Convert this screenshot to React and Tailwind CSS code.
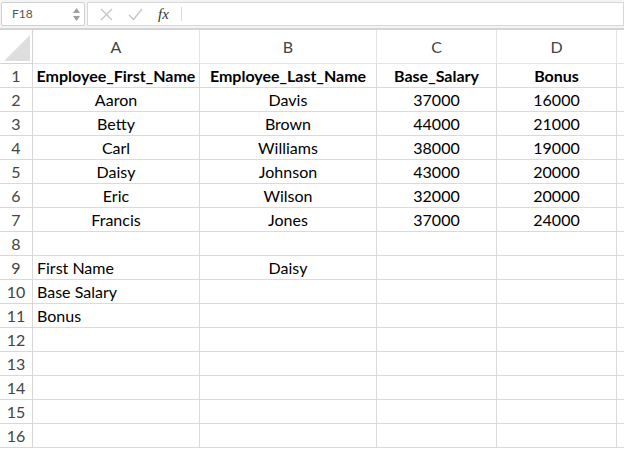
import React from "react";

const cols = ["A", "B", "C", "D"];

const rows = [
  ["Employee_First_Name", "Employee_Last_Name", "Base_Salary", "Bonus"],
  ["Aaron", "Davis", "37000", "16000"],
  ["Betty", "Brown", "44000", "21000"],
  ["Carl", "Williams", "38000", "19000"],
  ["Daisy", "Johnson", "43000", "20000"],
  ["Eric", "Wilson", "32000", "20000"],
  ["Francis", "Jones", "37000", "24000"],
  ["", "", "", ""],
  ["First Name", "Daisy", "", ""],
  ["Base Salary", "", "", ""],
  ["Bonus", "", "", ""],
  ["", "", "", ""],
  ["", "", "", ""],
  ["", "", "", ""],
  ["", "", "", ""],
  ["", "", "", ""],
];

const gridCols = "grid grid-cols-[33px_167px_177px_120px_120px_1fr]";

function FormulaBar() {
  return (
    <div className="flex h-[30px] items-stretch bg-[#f4f4f4] border-b-2 border-[#d4d4d4] pt-[2px] pb-[2px]">
      <div className="ml-[1px] flex w-[84px] items-center justify-between rounded-[2px] border border-[#d0d0d0] bg-white pl-[10px] pr-[4px]">
        <span className="text-[12px] text-[#555]">F18</span>
        <div className="flex flex-col items-center gap-[3px]">
          <svg width="7" height="5" viewBox="0 0 7 5"><path d="M3.5 0L7 5H0z" fill="#a0a0a0" /></svg>
          <svg width="7" height="5" viewBox="0 0 7 5"><path d="M0 0h7L3.5 5z" fill="#a0a0a0" /></svg>
        </div>
      </div>
      <div className="ml-[2px] flex flex-1 items-center border border-[#d8d8d8] bg-white">
        <div className="flex items-center gap-[15px] pl-[12px] pr-[12px]">
          <svg width="13" height="13" viewBox="0 0 13 13"><path d="M1 1l11 11M12 1L1 12" stroke="#c4c4c4" strokeWidth="1.3" /></svg>
          <svg width="15" height="13" viewBox="0 0 15 13"><path d="M1 7l4.5 4.5L14 1" stroke="#c4c4c4" strokeWidth="1.3" fill="none" /></svg>
          <span className="text-[15px] italic text-[#333]" style={{ fontFamily: "'Liberation Serif', serif" }}>fx</span>
        </div>
        <div className="h-[14px] w-px bg-[#dcdcdc]" />
      </div>
    </div>
  );
}

function HeaderRow() {
  return (
    <div className={`${gridCols} h-[34px]`}>
      <div className="flex items-end justify-end border-r border-b border-[#d4d4d4] pr-[2px] pb-[2px]">
        <svg width="26" height="26" viewBox="0 0 26 26"><path d="M26 0V26H0z" fill="#dedede" /></svg>
      </div>
      {cols.map((c) => (
        <div key={c} className="flex items-center justify-center border-r border-b border-[#e4e4e4] text-[16px] leading-none text-[#444]">
          {c}
        </div>
      ))}
      <div className="border-b border-[#e4e4e4]" />
    </div>
  );
}

export default function App() {
  return (
    <div className="h-[450px] w-[624px] overflow-hidden bg-white" style={{ fontFamily: "Lato, 'Open Sans', sans-serif" }}>
      <FormulaBar />
      <HeaderRow />
      {rows.map((r, i) => (
        <div key={i} className={`${gridCols} h-[24px]`}>
          <div className="flex items-center justify-center border-r border-b border-[#d8d8d8] text-[16px] leading-none text-[#444]">
            {i + 1}
          </div>
          {r.map((v, j) => {
            const left = i >= 8 && j === 0;
            return (
              <div
                key={j}
                className={`flex items-center border-r border-b border-[#dadada] text-[16px] leading-none text-black ${left ? "justify-start pl-[4px]" : "justify-center"} ${i === 0 ? "font-bold" : ""}`}
              >
                {v}
              </div>
            );
          })}
          <div className="border-b border-[#dadada]" />
        </div>
      ))}
    </div>
  );
}
